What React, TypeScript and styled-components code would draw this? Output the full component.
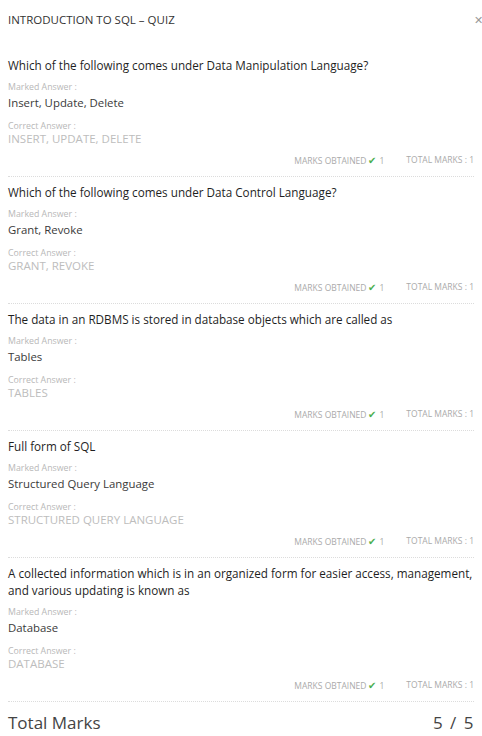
import React from "react";
import styled, { createGlobalStyle } from "styled-components";

const Global = createGlobalStyle`
  html, body { margin: 0; padding: 0; background: #fff; }
  body { font-family: "Open Sans", "Noto Sans", sans-serif; }
`;

const Page = styled.div`
  width: 482px;
  box-sizing: border-box;
  padding: 0 8px;
`;

const Header = styled.div`
  display: flex;
  justify-content: space-between;
  align-items: center;
  height: 50px;
  padding-bottom: 10px;
  box-sizing: border-box;
`;

const Title = styled.div`
  font-size: 11.5px;
  line-height: 16px;
  color: #333;
  text-transform: uppercase;
`;

const Close = styled.span`
  font-size: 11px;
  line-height: 16px;
  color: #999;
  margin-right: -9px;
`;

const Block = styled.div`
  padding: 7px 0 9px;
  border-bottom: 1px dotted #dcdcdc;
`;

const Question = styled.div`
  font-size: 11.7px;
  line-height: 17px;
  font-weight: 400;
  color: #1f1f1f;
  margin-right: -6px;
`;

const Label = styled.div<{ $gap: number }>`
  font-size: 8.8px;
  line-height: 10px;
  color: #b8b8b8;
  margin-top: ${(p) => p.$gap}px;
`;

const Answer = styled.div`
  font-size: 11.4px;
  line-height: 18px;
  color: #3a3a3a;
  margin-top: 2px;
`;

const Correct = styled.div`
  font-size: 11.5px;
  line-height: 16px;
  color: #bdbdbd;
  text-transform: uppercase;
`;

const MarksRow = styled.div`
  display: flex;
  justify-content: flex-end;
  gap: 22px;
  margin-top: 7px;
  font-size: 8.5px;
  line-height: 12px;
  color: #aaa;
  text-transform: uppercase;
`;

const Check = styled.span`
  color: #4caf50;
  font-size: 10px;
  margin: 0 3px 0 2px;
`;

const Footer = styled.div`
  display: flex;
  justify-content: space-between;
  align-items: center;
  margin-top: 9px;
  line-height: 24px;
  color: #444;
`;

const TotalLabel = styled.div`
  font-size: 17px;
`;

const TotalValue = styled.div`
  font-size: 17px;
  font-weight: 400;
  letter-spacing: 1.5px;
  margin-right: -1px;
`;

const items = [
  { q: "Which of the following comes under Data Manipulation Language?", a: "Insert, Update, Delete" },
  { q: "Which of the following comes under Data Control Language?", a: "Grant, Revoke" },
  { q: "The data in an RDBMS is stored in database objects which are called as", a: "Tables" },
  { q: "Full form of SQL", a: "Structured Query Language" },
  {
    q: "A collected information which is in an organized form for easier access, management, and various updating is known as",
    a: "Database",
  },
];

export default function App() {
  return (
    <Page>
      <Global />
      <Header>
        <Title>Introduction to SQL – Quiz</Title>
        <Close>✕</Close>
      </Header>
      {items.map((it, i) => (
        <Block key={i}>
          <Question>{it.q}</Question>
          <Label $gap={8}>Marked Answer :</Label>
          <Answer>{it.a}</Answer>
          <Label $gap={9}>Correct Answer :</Label>
          <Correct>{it.a}</Correct>
          <MarksRow>
            <span>
              Marks Obtained<Check>✔</Check>1
            </span>
            <span>Total Marks : 1</span>
          </MarksRow>
        </Block>
      ))}
      <Footer>
        <TotalLabel>Total Marks</TotalLabel>
        <TotalValue>5 / 5</TotalValue>
      </Footer>
    </Page>
  );
}
